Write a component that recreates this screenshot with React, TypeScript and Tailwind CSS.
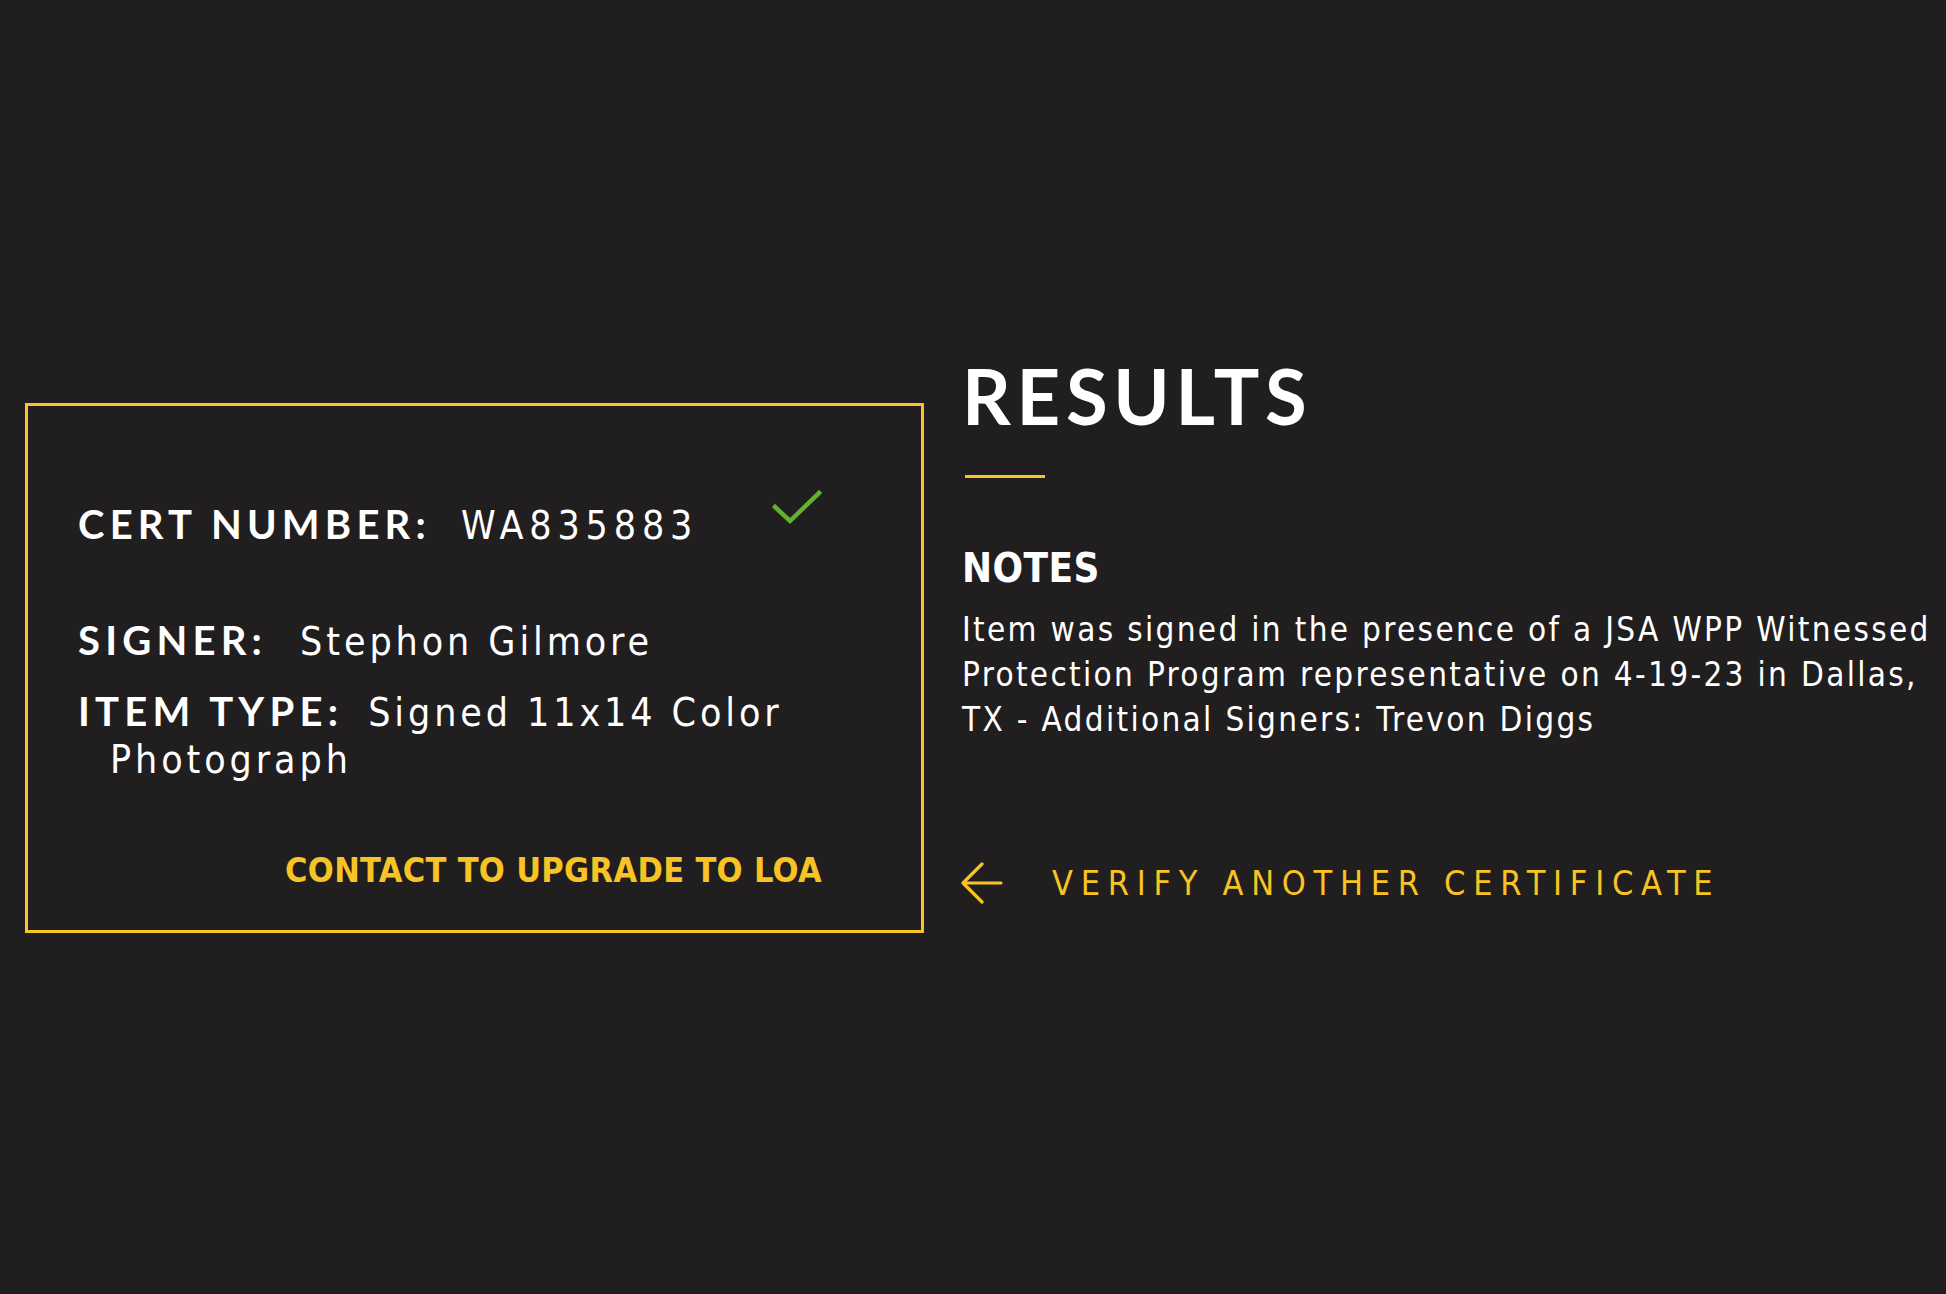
const label = "font-['Lato',sans-serif] font-bold text-[40px] leading-[48px] tracking-[0.13em] text-white";
const value = "font-['Liberation_Sans_Narrow','DejaVu_Sans_Condensed',sans-serif] text-[39px] leading-[47px] tracking-[0.1em] text-white";
const narrow = "font-['Liberation_Sans_Narrow','DejaVu_Sans_Condensed',sans-serif]";

function CheckMark() {
  return (
    <svg width="50" height="36" viewBox="0 0 50 36" fill="none" className="mt-[-10px]">
      <path d="M3 17 L18 31 L47 3" stroke="#62b22f" strokeWidth="4.5" strokeLinecap="square" />
    </svg>
  );
}

function BackArrow() {
  return (
    <svg width="44" height="42" viewBox="0 0 44 42" fill="none" className="ml-[-3px]">
      <path d="M42 21 H4 M23 2 L4 21 L23 40" stroke="#f7c325" strokeWidth="3.2" strokeLinecap="round" strokeLinejoin="round" />
    </svg>
  );
}

export default function App() {
  return (
    <div className="w-full h-[1294px] bg-[#211e1f] overflow-hidden">
      <div className="flex items-start pl-[25px]">
        {/* certificate card */}
        <div className="shrink-0 mt-[403px] w-[899px] h-[530px] border-[3px] border-[#f7c325] pl-[50px] pr-[99px] pt-[94px] flex flex-col">
          <div className="flex items-start justify-between">
            <div className="flex items-baseline">
              <span className={label}>CERT NUMBER:</span>
              <span className={`${value} ml-[30px] tracking-[0.15em]`}>WA835883</span>
            </div>
            <CheckMark />
          </div>

          <div className="flex items-baseline mt-[67px]">
            <span className={label}>SIGNER:</span>
            <span className={`${value} ml-[33px]`}>Stephon Gilmore</span>
          </div>

          <div className="flex flex-col mt-[22px]">
            <div className="flex items-baseline">
              <span className={label}>ITEM TYPE:</span>
              <span className={`${value} ml-[25px]`}>Signed 11x14 Color</span>
            </div>
            <span className={`${value} pl-[32px]`}>Photograph</span>
          </div>

          <div className={`mt-auto pb-[43px] text-right ${narrow} font-bold text-[34px] leading-[34px] tracking-[0.01em] text-[#f7c325]`}>
            CONTACT TO UPGRADE TO LOA
          </div>
        </div>

        {/* results column */}
        <div className="mt-[358px] ml-[38px] flex flex-col">
          <h1 className="font-['Lato',sans-serif] font-bold text-[76px] leading-none tracking-[0.075em] text-white">
            RESULTS
          </h1>
          <div className="mt-[41px] ml-[3px] w-[80px] h-[3px] bg-[#f7c325]" />

          <h2 className={`mt-[70px] ${narrow} font-bold text-[40px] leading-[40px] tracking-[0.01em] text-white`}>
            NOTES
          </h2>
          <p className={`mt-[19px] w-[985px] ${narrow} text-[33px] leading-[45px] tracking-[0.07em] text-white`}>
            Item was signed in the presence of a JSA WPP Witnessed Protection Program representative on 4-19-23 in Dallas, TX - Additional Signers: Trevon Diggs
          </p>

          <a href="#" className="mt-[120px] flex items-center">
            <BackArrow />
            <span className={`ml-[49px] ${narrow} text-[34px] leading-[34px] tracking-[0.227em] text-[#f7c325]`}>
              VERIFY ANOTHER CERTIFICATE
            </span>
          </a>
        </div>
      </div>
    </div>
  );
}
